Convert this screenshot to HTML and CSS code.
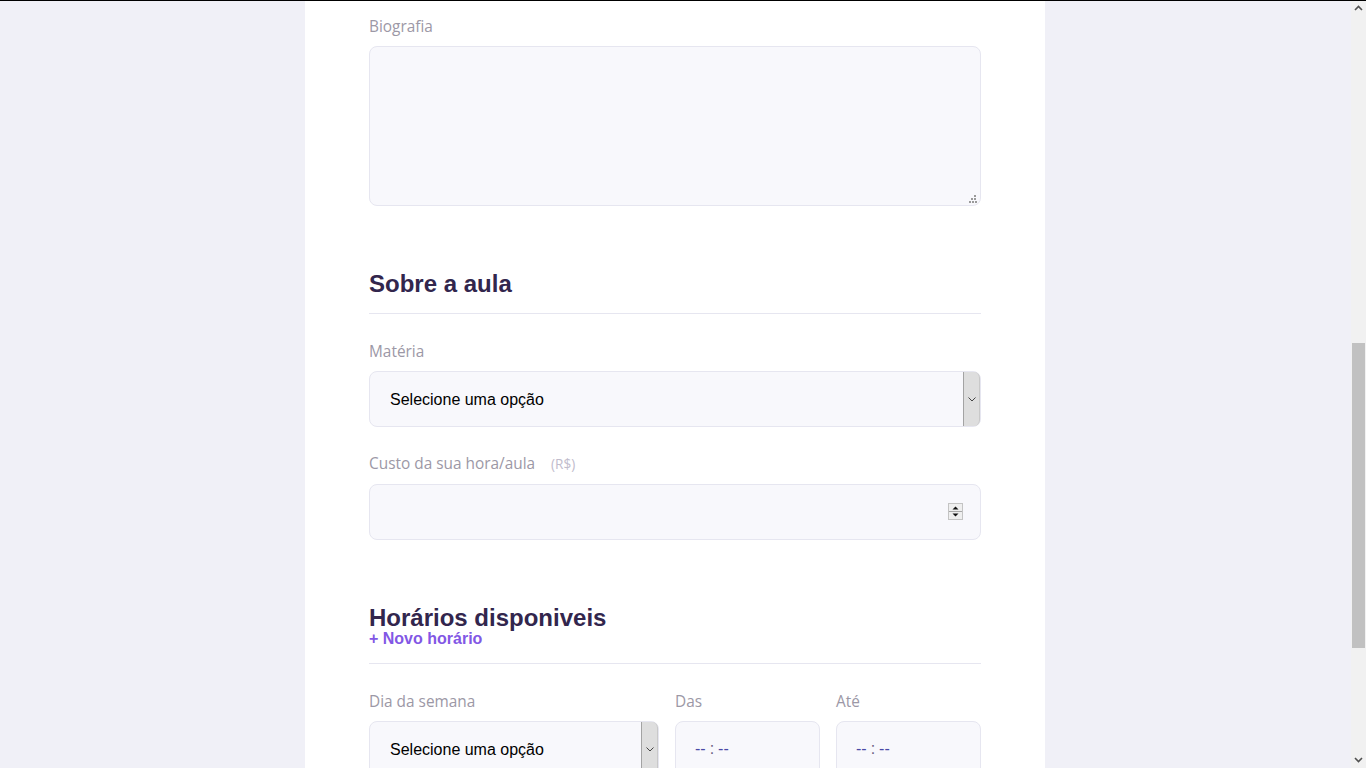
FILE: index.html
```html
<!DOCTYPE html>
<html lang="pt-BR">
<head>
<meta charset="utf-8">
<title>Proffy | Dar aulas</title>
<link rel="stylesheet" href="styles.css">
</head>
<body>
<div class="window-edge"></div>
<div class="scrollbar" aria-hidden="true">
  <span class="scroll-arrow">
    <svg width="15" height="17" viewBox="0 0 15 17"><path d="M4 10 L7.5 6.5 L11 10" fill="none" stroke="#505050" stroke-width="1.6"/></svg>
  </span>
  <span class="scroll-track"><span class="scroll-thumb"></span></span>
  <span class="scroll-arrow">
    <svg width="15" height="17" viewBox="0 0 15 17"><path d="M4 7 L7.5 10.5 L11 7" fill="none" stroke="#505050" stroke-width="1.6"/></svg>
  </span>
</div>
<div class="page-teacher-form">
  <header class="page-header">
    <div class="top-bar">
      <a href="#" class="back" aria-label="Voltar">
        <svg width="24" height="24" viewBox="0 0 24 24" fill="none" stroke="#d4c2ff" stroke-width="2" stroke-linecap="round" stroke-linejoin="round"><path d="M19 12H5M12 19l-7-7 7-7"/></svg>
      </a>
      <span class="logo">Proffy</span>
    </div>
    <div class="header-content">
      <strong class="header-title">Que incrível que você quer dar aulas.</strong>
      <p class="header-text">O primeiro passo é preencher esse formulário de inscrição</p>
    </div>
  </header>

  <main class="form-box">
    <form>
      <fieldset class="form-section">
        <legend class="section-title">Seus dados</legend>
        <div class="input-block">
          <label class="field-label" for="name">Nome completo</label>
          <input class="field" id="name" type="text">
        </div>
        <div class="input-block">
          <label class="field-label" for="avatar">Avatar</label>
          <input class="field" id="avatar" type="text">
        </div>
        <div class="input-block">
          <label class="field-label" for="whatsapp">Whatsapp</label>
          <input class="field" id="whatsapp" type="text">
        </div>
        <div class="input-block" id="bio-block">
          <label class="field-label" for="bio">Biografia</label>
          <div class="field-wrap">
            <textarea class="field field-textarea" id="bio"></textarea>
            <span class="grip" aria-hidden="true">
              <svg width="8" height="10" viewBox="0 0 8 10" fill="#9a9a9a"><rect x="5" y="1" width="2" height="2"/><rect x="2" y="4" width="2" height="2"/><rect x="5" y="4" width="2" height="2"/><rect x="0" y="7" width="2" height="2"/><rect x="3" y="7" width="2" height="2"/><rect x="6" y="7" width="2" height="2"/></svg>
            </span>
          </div>
        </div>
      </fieldset>

      <fieldset class="form-section">
        <legend class="section-title">Sobre a aula</legend>
        <div class="input-block">
          <label class="field-label" for="subject">Matéria</label>
          <div class="field-wrap">
            <select class="field field-select" id="subject">
              <option value="" disabled selected hidden>Selecione uma opção</option>
              <option>Artes</option>
              <option>Biologia</option>
              <option>Ciências</option>
              <option>Matemática</option>
            </select>
            <span class="select-button" aria-hidden="true">
              <svg width="8" height="5" viewBox="0 0 8 5"><path d="M0.5 0.5 L4 4 L7.5 0.5" fill="none" stroke="#444" stroke-width="1"/></svg>
            </span>
          </div>
        </div>
        <div class="input-block">
          <label class="field-label field-label-hint" for="cost">Custo da sua hora/aula <small class="label-hint">(R$)</small></label>
          <div class="field-wrap">
            <input class="field field-number" id="cost" type="number">
            <span class="spin" aria-hidden="true">
              <svg width="15" height="17" viewBox="0 0 15 17"><rect x="0.5" y="0.5" width="14" height="16" fill="#efefef" stroke="#c4c4c4"/><rect x="1" y="8" width="13" height="1" fill="#a8a8a8"/><path d="M7.5 3.5 L10.5 6.5 H4.5 Z" fill="#111"/><path d="M7.5 13.5 L10.5 10.5 H4.5 Z" fill="#111"/></svg>
            </span>
          </div>
        </div>
      </fieldset>

      <fieldset class="form-section">
        <legend class="section-title section-title-stack">
          <span>Horários disponiveis</span>
          <button type="button" class="add-button">+ Novo horário</button>
        </legend>
        <div class="schedule-item">
          <div class="input-block">
            <label class="field-label" for="weekday">Dia da semana</label>
            <div class="field-wrap">
              <select class="field field-select" id="weekday">
                <option value="" disabled selected hidden>Selecione uma opção</option>
                <option>Domingo</option>
                <option>Segunda-feira</option>
                <option>Terça-feira</option>
              </select>
              <span class="select-button" aria-hidden="true">
                <svg width="8" height="5" viewBox="0 0 8 5"><path d="M0.5 0.5 L4 4 L7.5 0.5" fill="none" stroke="#444" stroke-width="1"/></svg>
              </span>
            </div>
          </div>
          <div class="input-block">
            <label class="field-label" for="from">Das</label>
            <div class="field-wrap">
              <input class="field field-time" id="from" type="time">
            </div>
          </div>
          <div class="input-block">
            <label class="field-label" for="to">Até</label>
            <div class="field-wrap">
              <input class="field field-time" id="to" type="time">
            </div>
          </div>
        </div>
      </fieldset>

      <footer class="form-footer">
        <p class="footer-note">
          <svg width="32" height="32" viewBox="0 0 32 32" fill="none" stroke="#8257e5" stroke-width="2"><path d="M16 4 L29 27 H3 Z" stroke-linejoin="round"/><path d="M16 13v7M16 23v1" stroke-linecap="round"/></svg>
          <span>Importante! <br>Preencha todos os dados</span>
        </p>
        <button type="button" class="save-button">Salvar cadastro</button>
      </footer>
    </form>
  </main>
</div>
<script src="script.js"></script>
</body>
</html>
```

FILE: styles.css
```css
:root {
  font-size: 62.5%;
}

* {
  margin: 0;
  padding: 0;
  box-sizing: border-box;
}

body {
  background: #f0f0f7;
  font: 500 1.6rem "Open Sans", sans-serif;
  color: #6a6180;
  padding-right: 16px;
}

.window-edge {
  position: fixed;
  top: 0;
  left: 0;
  right: 0;
  height: 1px;
  background: #000;
  z-index: 20;
}

/* window scrollbar (drawn, the browser hides its own) */
.scrollbar {
  position: fixed;
  top: 0;
  right: 0;
  bottom: 0;
  width: 15px;
  background: #f1f1f1;
  display: flex;
  flex-direction: column;
  z-index: 10;
}

.scroll-arrow {
  display: block;
  height: 17px;
}

.scroll-arrow svg {
  display: block;
}

.scroll-track {
  flex: 1;
  display: block;
  padding-top: 326px;
}

.scroll-thumb {
  display: block;
  margin: 0 1px;
  height: 305px;
  background: #c1c1c1;
}

.page-header {
  height: 399px;
  background: #8257e5;
  display: flex;
  flex-direction: column;
}

.top-bar {
  width: 90%;
  max-width: 1100px;
  margin: 0 auto;
  height: 64px;
  display: flex;
  align-items: center;
  justify-content: space-between;
}

.back {
  display: flex;
}

.logo {
  font: 700 2.4rem "Liberation Sans", Arial, sans-serif;
  color: #fff;
}

.header-content {
  flex: 1;
  width: 100%;
  max-width: 740px;
  margin: 0 auto;
  padding-bottom: 48px;
  display: flex;
  flex-direction: column;
  justify-content: center;
  align-items: flex-start;
}

.header-title {
  font: 700 3.6rem "Liberation Sans", Arial, sans-serif;
  line-height: 4.2rem;
  color: #fff;
  max-width: 350px;
}

.header-text {
  max-width: 300px;
  margin-top: 2.4rem;
  font-size: 1.6rem;
  line-height: 2.6rem;
  color: #d4c2ff;
}

.form-box {
  background: #fff;
  width: 100%;
  max-width: 740px;
  border-radius: 8px;
  margin: -32px auto 32px;
  padding-top: 64px;
  overflow: hidden;
}

.form-section {
  border: 0;
  padding: 0 64px;
  min-width: 0;
}

.form-section + .form-section {
  margin-top: 64px;
}

.section-title {
  width: 100%;
  font: 700 2.4rem/27px "Liberation Sans", Arial, sans-serif;
  color: #32264d;
  margin-bottom: 25px;
  padding-bottom: 16px;
  border-bottom: 1px solid #e6e6f0;
}

.section-title-stack {
  display: flex;
  flex-direction: column;
  align-items: flex-start;
}

.add-button {
  display: block;
  background: none;
  border: 0;
  color: #8257e5;
  font: 700 1.6rem/16px "Liberation Sans", Arial, sans-serif;
  cursor: pointer;
}

.input-block + .input-block {
  margin-top: 24px;
}

.field-label {
  display: block;
  padding-top: 2px;
  font: 400 15.4px/22px "Open Sans", sans-serif;
  color: #9c98a6;
}

.field-label-hint {
  min-height: 25px;
}

.label-hint {
  font-size: 13.6px;
  padding-left: 1.2rem;
  color: #c1bccc;
}

.field-wrap {
  position: relative;
  margin-top: 8px;
}

.field {
  display: block;
  width: 100%;
  height: 56px;
  border-radius: 8px;
  background: #f8f8fc;
  border: 1px solid #e6e6f0;
  outline: 0;
  padding: 0 16px;
  font: 400 1.6rem "Liberation Sans", Arial, sans-serif;
  color: #000;
}

.field-textarea {
  height: 160px;
  padding: 12px 16px;
  resize: none;
}

.grip {
  position: absolute;
  right: 4px;
  bottom: 2px;
  display: flex;
  pointer-events: none;
}

.field-select {
  -webkit-appearance: none;
  appearance: none;
  padding-left: 20px;
  padding-right: 24px;
}

.select-button {
  position: absolute;
  top: 1px;
  bottom: 1px;
  right: 1px;
  width: 17px;
  background: #dedede;
  border-left: 1px solid #a3a3a3;
  border-right: 1px solid #c9c9c9;
  border-radius: 0 6px 6px 0;
  display: flex;
  align-items: center;
  justify-content: center;
  pointer-events: none;
}

.field-number::-webkit-inner-spin-button,
.field-number::-webkit-outer-spin-button {
  -webkit-appearance: none;
  margin: 0;
}

.spin {
  position: absolute;
  top: 19px;
  right: 18px;
  display: flex;
  pointer-events: none;
}

.field-time {
  padding-left: 18px;
}

.field-time::-webkit-calendar-picker-indicator {
  display: none;
}

.field-time::-webkit-datetime-edit-ampm-field {
  display: none;
}

.field-time::-webkit-datetime-edit-hour-field,
.field-time::-webkit-datetime-edit-minute-field {
  color: #4a4aa6;
}

.field-time::-webkit-datetime-edit-text {
  color: #6a6180;
  padding: 0 3px;
}

.schedule-item {
  display: grid;
  grid-template-columns: 2fr 1fr 1fr;
  column-gap: 16px;
}

.schedule-item .input-block + .input-block {
  margin-top: 0;
}

.form-footer {
  margin-top: 64px;
  padding: 40px 64px;
  background: #fafafc;
  border-top: 1px solid #e6e6f0;
  display: flex;
  align-items: center;
  justify-content: space-between;
}

.footer-note {
  display: flex;
  align-items: center;
  gap: 20px;
  font-size: 1.4rem;
  line-height: 2.4rem;
  color: #9c98a6;
}

.save-button {
  width: 200px;
  height: 56px;
  background: #04d361;
  color: #fff;
  border: 0;
  border-radius: 8px;
  font: 700 1.6rem "Liberation Sans", Arial, sans-serif;
}
```

FILE: script.js
```js
(function () {
  var block = document.getElementById('bio-block');
  var top = block.getBoundingClientRect().top + window.scrollY - 14;
  window.scrollTo(0, top);
})();
```
